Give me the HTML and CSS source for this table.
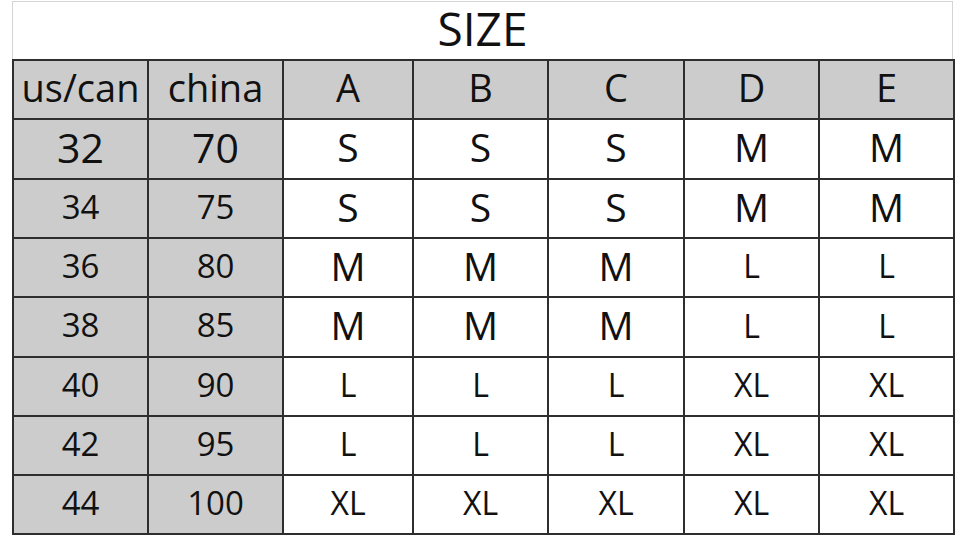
FILE: index.html
```html
<!DOCTYPE html>
<html>
<head>
<meta charset="utf-8">
<link rel="stylesheet" href="styles.css">
</head>
<body>
<div class="sheet">
  <div class="title">SIZE</div>
  <table class="size-table">
    <colgroup>
      <col class="c135"><col class="c135"><col class="c130"><col class="c135"><col class="c136"><col class="c135"><col class="c135">
    </colgroup>
    <tr class="head">
      <th>us/can</th><th>china</th><th>A</th><th>B</th><th>C</th><th>D</th><th>E</th>
    </tr>
    <tr class="tall">
      <td class="g big">32</td><td class="g big">70</td><td class="sm">S</td><td class="sm">S</td><td class="sm">S</td><td class="sm">M</td><td class="sm">M</td>
    </tr>
    <tr>
      <td class="g num">34</td><td class="g num">75</td><td class="sm">S</td><td class="sm">S</td><td class="sm">S</td><td class="sm">M</td><td class="sm">M</td>
    </tr>
    <tr>
      <td class="g num">36</td><td class="g num">80</td><td class="sm">M</td><td class="sm">M</td><td class="sm">M</td><td class="lx">L</td><td class="lx">L</td>
    </tr>
    <tr class="tall">
      <td class="g num">38</td><td class="g num">85</td><td class="sm">M</td><td class="sm">M</td><td class="sm">M</td><td class="lx">L</td><td class="lx">L</td>
    </tr>
    <tr>
      <td class="g num">40</td><td class="g num">90</td><td class="lx">L</td><td class="lx">L</td><td class="lx">L</td><td class="lx">XL</td><td class="lx">XL</td>
    </tr>
    <tr>
      <td class="g num">42</td><td class="g num">95</td><td class="lx">L</td><td class="lx">L</td><td class="lx">L</td><td class="lx">XL</td><td class="lx">XL</td>
    </tr>
    <tr>
      <td class="g num">44</td><td class="g num">100</td><td class="lx">XL</td><td class="lx">XL</td><td class="lx">XL</td><td class="lx">XL</td><td class="lx">XL</td>
    </tr>
  </table>
</div>
</body>
</html>
```

FILE: styles.css
```css
html, body {
  margin: 0;
  padding: 0;
  background: #ffffff;
}

body {
  font-family: "Open Sans", "Noto Sans", sans-serif;
  color: #111111;
  overflow: hidden;
}

.sheet {
  margin: 1px 0 0 12px;
  width: 941px;
}

.title {
  box-sizing: border-box;
  height: 58px;
  border: 1px solid #d4d4d4;
  border-bottom: none;
  display: flex;
  align-items: center;
  justify-content: center;
  font-size: 46px;
  line-height: 1.1;
  padding-bottom: 4px;
}

.size-table {
  border-collapse: collapse;
  table-layout: fixed;
  width: 941px;
}

.c135 { width: 135px; }
.c130 { width: 130px; }
.c136 { width: 136px; }

.size-table tr {
  height: 59px;
}

.size-table tr.tall {
  height: 60px;
}

.size-table th,
.size-table td {
  border: 2px solid #2e2e2e;
  padding: 0 0 3px 0;
  text-align: center;
  vertical-align: middle;
  line-height: 1.1;
  font-weight: normal;
  white-space: nowrap;
}

.size-table th {
  background: #cccccc;
  font-size: 38px;
}

.size-table td.g {
  background: #cccccc;
}

.big { font-size: 41px; }
.num { font-size: 33px; }
.sm { font-size: 39px; }
.lx { font-size: 32px; }
```
